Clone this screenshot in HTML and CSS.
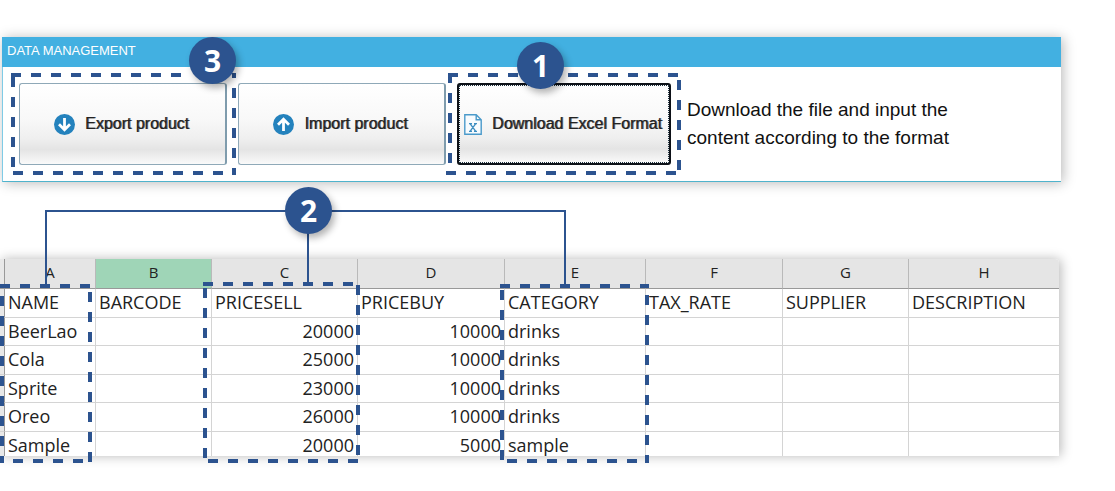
FILE: index.html
```html
<!DOCTYPE html>
<html lang="en">
<head>
<meta charset="utf-8">
<title>Data management</title>
<link rel="stylesheet" href="styles.css">
</head>
<body>
<main class="page">
  <section class="panel">
    <h1 class="panel-title">DATA MANAGEMENT</h1>
    <div class="panel-body">
      <div class="actions">
        <button class="action" type="button">
          <svg class="icon" viewBox="0 0 21 21" aria-hidden="true"><circle cx="10.5" cy="10.5" r="10.5" fill="#2482bd"/><path d="M10.5 4v11.5M5 10.2l5.5 5.5 5.5-5.5" fill="none" stroke="#fff" stroke-width="2.8"/></svg>
          <span>Export product</span>
        </button>
        <button class="action" type="button">
          <svg class="icon" viewBox="0 0 21 21" aria-hidden="true"><circle cx="10.5" cy="10.5" r="10.5" fill="#2482bd"/><path d="M10.5 17V5.5M5 10.8l5.5-5.5 5.5 5.5" fill="none" stroke="#fff" stroke-width="2.8"/></svg>
          <span>Import product</span>
        </button>
        <button class="action action-focused" type="button">
          <svg class="icon icon-file" viewBox="0 0 18 21" aria-hidden="true"><path d="M.8.8h11.4l5 5v14.4H.8zM12.2.8v5h5" fill="#f7fbfe" stroke="#4a9aca" stroke-width="1.4"/><path d="M6.2 9.8l5.4 7.4M11.6 9.8l-5.4 7.4M5 9.6h3M10 9.6h3M5 17.4h3M10 17.4h3" fill="none" stroke="#3b8dc1" stroke-width="1.3"/></svg>
          <span>Download Excel Format</span>
        </button>
      </div>
      <p class="note">Download the file and input the<br>content according to the format</p>
    </div>
  </section>

  <div class="sheet">
    <table class="grid">
      <colgroup>
        <col class="col-gutter"><col class="col-a"><col class="col-b"><col class="col-c"><col class="col-d"><col class="col-e"><col class="col-f"><col class="col-g"><col>
      </colgroup>
      <thead>
        <tr><th></th><th>A</th><th class="selected">B</th><th>C</th><th>D</th><th>E</th><th>F</th><th>G</th><th>H</th></tr>
      </thead>
      <tbody>
        <tr><td></td><td>NAME</td><td>BARCODE</td><td>PRICESELL</td><td>PRICEBUY</td><td>CATEGORY</td><td>TAX_RATE</td><td>SUPPLIER</td><td>DESCRIPTION</td></tr>
        <tr><td></td><td>BeerLao</td><td></td><td class="num">20000</td><td class="num">10000</td><td>drinks</td><td></td><td></td><td></td></tr>
        <tr><td></td><td>Cola</td><td></td><td class="num">25000</td><td class="num">10000</td><td>drinks</td><td></td><td></td><td></td></tr>
        <tr><td></td><td>Sprite</td><td></td><td class="num">23000</td><td class="num">10000</td><td>drinks</td><td></td><td></td><td></td></tr>
        <tr><td></td><td>Oreo</td><td></td><td class="num">26000</td><td class="num">10000</td><td>drinks</td><td></td><td></td><td></td></tr>
        <tr><td></td><td>Sample</td><td></td><td class="num">20000</td><td class="num">5000</td><td>sample</td><td></td><td></td><td></td></tr>
      </tbody>
    </table>
  </div>

  <svg class="callouts" width="690" height="470" viewBox="0 0 690 470" aria-hidden="true">
    <g class="connector">
      <path d="M46 285V211H565V285M308 211V283"/>
    </g>
    <g class="dashes">
      <path d="M11 75H190M13 87V77M13 97V175M13 173H232M234 88V175M234 73V78"/>
      <path d="M448 75H681M450 73V171M446 173H677M679 80V175"/>
      <path d="M0 286H92M2 296V463M90 292V463M13 461H88"/>
      <path d="M203 284H356M205 288V463M358 285V459M208 461H360"/>
      <path d="M500 286H649M502 290V463M647 295V463M507 461H645"/>
    </g>
  </svg>
  <span class="badge badge-1">1</span>
  <span class="badge badge-2">2</span>
  <span class="badge badge-3">3</span>
</main>
</body>
</html>
```
FILE: styles.css
```css
* { box-sizing: border-box; }

body {
  margin: 0;
  background: #fff;
  color: #222;
  font-family: "Liberation Sans", Arial, sans-serif;
}

.page {
  position: relative;
  padding: 37px 54px 36px 0;
  overflow: hidden;
}

.panel {
  margin-left: 2px;
  background: #fff;
  box-shadow: 2px 1px 12px rgba(0, 0, 0, 0.28);
}

.panel-title {
  margin: 0;
  padding: 0 5px;
  background: #42b0e1;
  color: #fff;
  font-size: 13px;
  font-weight: 400;
  line-height: 28px;
  height: 30px;
}

.panel-body {
  display: flex;
  align-items: center;
  gap: 16px;
  padding: 16px;
  border-left: 1px solid #7fcbe6;
  border-bottom: 1px solid #4fb3cc;
}

.actions {
  display: flex;
  gap: 11px;
}

.action {
  display: flex;
  align-items: center;
  justify-content: center;
  gap: 10px;
  width: 208px;
  height: 82px;
  padding: 0 2px 0 0;
  border: 1px solid #8fa9b8;
  border-right: 2px solid #7f9cad;
  border-radius: 3px;
  background: linear-gradient(#fff 0%, #f8f8f8 45%, #efefef 68%, #e4e4e4 82%, #fafafa 100%);
  color: #222;
  font-family: inherit;
  font-size: 16px;
  text-shadow: 1px 0 rgba(34, 34, 34, 0.7);
  white-space: nowrap;
}

.action-focused {
  width: 214px;
  border: 2px solid #0d1117;
  outline: 1px dotted #1f3340;
  outline-offset: -3px;
}

.icon {
  flex: none;
  width: 21px;
  height: 21px;
}

.icon-file { width: 18px; }

.note {
  margin: 0;
  color: #111;
  font-size: 19px;
  line-height: 28px;
}

.sheet {
  margin-top: 77px;
  margin-right: 2px;
  overflow: hidden;
  background: #fff;
  border-top-right-radius: 4px;
  box-shadow: 2px 0 12px rgba(0, 0, 0, 0.28);
}

.grid {
  width: 100%;
  table-layout: fixed;
  border-collapse: separate;
  border-spacing: 0;
  font-family: "Open Sans", "Noto Sans", sans-serif;
  font-size: 18px;
  line-height: 22px;
}

.col-gutter { width: 5px; }
.col-a { width: 91px; }
.col-b { width: 116px; }
.col-c { width: 146px; }
.col-d { width: 147px; }
.col-e { width: 141px; }
.col-f { width: 137px; }
.col-g { width: 126px; }

.grid th {
  height: 30px;
  padding: 0 0 4px;
  background: #e5e5e5;
  border-right: 1px solid #b9b9b9;
  border-bottom: 1px solid #999;
  color: #222;
  font-size: 15px;
  font-weight: 400;
}

.grid th.selected { background: #9fd5b7; }

.grid td {
  height: 28px;
  padding: 2px 3px 0;
  border-right: 1px solid #d4d4d4;
  border-bottom: 1px solid #d4d4d4;
  vertical-align: top;
  white-space: nowrap;
}

.grid tr:nth-child(odd) td { height: 29px; }

.grid tbody tr:last-child td {
  height: 24px;
  border-bottom: 0;
}

.grid th:first-child,
.grid td:first-child {
  padding: 0;
  background: #e8e8e8;
  border-right-color: #999;
}

.grid th:last-child,
.grid td:last-child { border-right: 0; }

.grid .num { text-align: right; }

.callouts {
  position: absolute;
  top: 0;
  left: 0;
  pointer-events: none;
}

.connector {
  fill: none;
  stroke: #2c538f;
  stroke-width: 2;
}

.dashes {
  fill: none;
  stroke: #2c538f;
  stroke-width: 4;
  stroke-dasharray: 10 10;
}

.badge {
  position: absolute;
  width: 47px;
  height: 47px;
  border-radius: 50%;
  background: #2c538f;
  box-shadow: 3px 4px 7px rgba(0, 0, 0, 0.3);
  color: #fff;
  font-family: "Open Sans", "Noto Sans", sans-serif;
  font-size: 30px;
  font-weight: 700;
  line-height: 48px;
  text-align: center;
}

.badge-1 { top: 42px; left: 517px; }
.badge-2 { top: 187px; left: 285px; }
.badge-3 { top: 37px; left: 189px; }
```
